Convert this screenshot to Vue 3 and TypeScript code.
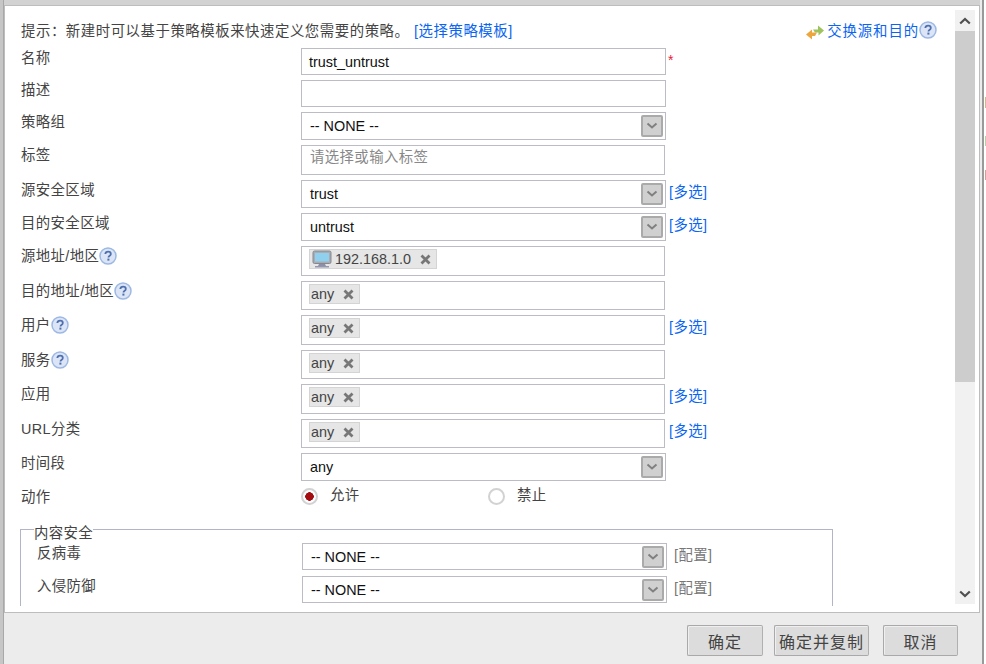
<template>
  <div class="window">
    <div class="edge-left"></div>
    <div class="main">
      <div class="top-band"></div>
      <div class="panel">
        <div class="content">
          <div class="tip-row">
            <div class="tip">
              提示：新建时可以基于策略模板来快速定义您需要的策略。
              <a class="link">[选择策略模板]</a>
            </div>
            <div class="swap">
              <svg class="swap-icon" width="18" height="16" viewBox="0 0 18 16">
                <path d="M7 5.500h5V1.500l6 5-5.500 5V8.500H9z" fill="#9ec25c" />
                <path d="M11 8.500H6V5.500L0 10.500l6 5V12h3z" fill="#eda63e" />
              </svg>
              <a class="link">交换源和目的</a>
              <HelpIcon />
            </div>
          </div>

          <div
            v-for="row in rows"
            :key="row.label"
            class="row"
            :style="{ height: row.pitch + 'px' }"
          >
            <div class="label cjk">
              {{ row.label }}<HelpIcon v-if="row.help" />
            </div>

            <div v-if="row.kind === 'text'" class="field text" :style="{ height: row.h + 'px' }">
              {{ row.value }}
            </div>
            <div
              v-else-if="row.kind === 'placeholder'"
              class="field tagbox placeholder cjk"
              :style="{ height: row.h + 'px' }"
            >
              请选择或输入标签
            </div>
            <div v-else-if="row.kind === 'select'" class="field select" :style="{ height: row.h + 'px' }">
              <span>{{ row.value }}</span>
              <span class="arrow">
                <svg width="12" height="8" viewBox="0 0 12 8">
                  <path d="M1.500 1.500 6 5.500l4.500-4" fill="none" stroke="#808080" stroke-width="2" />
                </svg>
              </span>
            </div>
            <div v-else class="field tagbox" :style="{ height: row.h + 'px' }">
              <span class="chip">
                <svg v-if="row.host" class="host" width="20" height="18" viewBox="0 0 20 18">
                  <rect x="1" y="1" width="18" height="12.500" rx="1.500" fill="#a9adb3" stroke="#85898f" />
                  <rect x="3" y="3" width="14" height="8.500" fill="#8fd0ee" />
                  <path d="M7 14h6l1 2H6z" fill="#8d8fa8" />
                  <rect x="3" y="16" width="14" height="1.500" fill="#9496ad" />
                </svg>
                {{ row.value }}
                <svg class="remove" width="11" height="11" viewBox="0 0 11 11">
                  <path d="M1.500 1.500l8 8M9.500 1.500l-8 8" stroke="#777" stroke-width="2.800" />
                </svg>
              </span>
            </div>

            <span v-if="row.required" class="star">*</span>
            <a v-if="row.multi" class="link multi cjk">[多选]</a>
          </div>

          <div class="action-row">
            <div class="label cjk">动作</div>
            <label class="radio cjk"><span class="dot on"></span>允许</label>
            <label class="radio cjk"><span class="dot"></span>禁止</label>
          </div>

          <fieldset class="group">
            <legend class="cjk">内容安全</legend>
            <div v-for="item in security" :key="item" class="sec-row">
              <div class="sec-label cjk">{{ item }}</div>
              <div class="field select">
                <span>-- NONE --</span>
                <span class="arrow">
                  <svg width="12" height="8" viewBox="0 0 12 8">
                    <path d="M1.500 1.500 6 5.500l4.500-4" fill="none" stroke="#808080" stroke-width="2" />
                  </svg>
                </span>
              </div>
              <a class="config cjk">[配置]</a>
            </div>
          </fieldset>
        </div>

        <div class="scrollbar">
          <div class="sb-btn">
            <svg width="12" height="8" viewBox="0 0 12 8">
              <path d="M1.200 6.500 6 2l4.800 4.500" fill="none" stroke="#505050" stroke-width="2.200" />
            </svg>
          </div>
          <div class="sb-thumb"></div>
          <div class="sb-rest"></div>
          <div class="sb-btn">
            <svg width="12" height="8" viewBox="0 0 12 8">
              <path d="M1.200 1.500 6 6l4.800-4.500" fill="none" stroke="#505050" stroke-width="2.200" />
            </svg>
          </div>
        </div>
      </div>

      <div class="footer">
        <button class="btn ok">确定</button>
        <button class="btn copy">确定并复制</button>
        <button class="btn cancel">取消</button>
      </div>
    </div>
    <div class="edge-right"></div>
  </div>
</template>

<script setup lang="ts">
import { h } from 'vue';

type Row = {
  label: string;
  kind: 'text' | 'placeholder' | 'select' | 'tags';
  pitch: number;
  h: number;
  value?: string;
  help?: boolean;
  multi?: boolean;
  required?: boolean;
  host?: boolean;
};

// small round "?" used beside several labels
const HelpIcon = () =>
  h('svg', { class: 'help', width: 18, height: 18, viewBox: '0 0 18 18', style: 'display:inline-block;vertical-align:-4px;flex:none' }, [
    h('circle', { cx: 9, cy: 9, r: 8, fill: '#dbe5f5', stroke: '#9db8e4', 'stroke-width': 1.5 }),
    h('path', {
      d: 'M6.300 7c.2-1.500 1.300-2.300 2.800-2.300 1.600 0 2.700.9 2.700 2.200 0 1.100-.6 1.600-1.400 2.100-.6.400-.9.700-.9 1.400',
      fill: 'none',
      stroke: '#4f6fae',
      'stroke-width': 1.800,
    }),
    h('rect', { x: 8.400, y: 11.600, width: 2, height: 2, fill: '#4f6fae' }),
  ]);

const rows: Row[] = [
  { label: '名称', kind: 'text', pitch: 32, h: 27, value: 'trust_untrust', required: true },
  { label: '描述', kind: 'text', pitch: 32, h: 27, value: '' },
  { label: '策略组', kind: 'select', pitch: 33, h: 28, value: '-- NONE --' },
  { label: '标签', kind: 'placeholder', pitch: 35, h: 30 },
  { label: '源安全区域', kind: 'select', pitch: 33, h: 28, value: 'trust', multi: true },
  { label: '目的安全区域', kind: 'select', pitch: 33, h: 28, value: 'untrust', multi: true },
  { label: '源地址/地区', kind: 'tags', pitch: 35, h: 30, value: '192.168.1.0', help: true, host: true },
  { label: '目的地址/地区', kind: 'tags', pitch: 34, h: 29, value: 'any', help: true },
  { label: '用户', kind: 'tags', pitch: 35, h: 30, value: 'any', help: true, multi: true },
  { label: '服务', kind: 'tags', pitch: 34, h: 29, value: 'any', help: true },
  { label: '应用', kind: 'tags', pitch: 35, h: 30, value: 'any', multi: true },
  { label: 'URL分类', kind: 'tags', pitch: 34, h: 29, value: 'any', multi: true },
  { label: '时间段', kind: 'select', pitch: 34, h: 28, value: 'any' },
];

const security = ['反病毒', '入侵防御'];
</script>

<style>
html,
body {
  margin: 0;
  background: #ececec;
}
</style>

<style scoped>
.window {
  display: flex;
  width: 986px;
  height: 664px;
  overflow: hidden;
  background: #ececec;
  font-family: "Liberation Sans", "Noto Sans CJK SC", sans-serif;
  font-size: 14.4px;
  color: #444;
}
.cjk {
  letter-spacing: 0.4px;
}
.edge-left {
  width: 3px;
  flex: none;
  background: #c6c6c6;
  border-right: 1px solid #a8a8a8;
}
.edge-right {
  width: 2px;
  flex: none;
  margin-left: 2px;
  background:
    linear-gradient(#d9b48c, #d9b48c) 1px 97px / 1px 11px no-repeat,
    linear-gradient(#b9d0a6, #b9d0a6) 1px 136px / 1px 10px no-repeat,
    linear-gradient(#dc9c96, #dc9c96) 1px 170px / 1px 10px no-repeat,
    #fff;
  border-left: 2px solid #9a9a9a;
}
.main {
  flex: 1;
  display: flex;
  flex-direction: column;
  min-width: 0;
}
.top-band {
  height: 5px;
  flex: none;
  background: #d2d2d2;
}
.panel {
  height: 608px;
  flex: none;
  display: flex;
  box-sizing: border-box;
  background: #fff;
  border: 1px solid #bdbdbd;
}
.content {
  flex: 1;
  min-width: 0;
  overflow: hidden;
  margin-bottom: 6px;
  padding: 15px 18px 0 16px;
}
.tip-row {
  height: 27px;
  display: flex;
  justify-content: space-between;
  line-height: 20px;
}
.tip {
  letter-spacing: 0.55px;
}
.link {
  color: #0a66f0;
}
.swap {
  display: flex;
  align-items: flex-start;
  height: 20px;
  letter-spacing: 0.9px;
}
.swap-icon {
  margin: 3px 3px 0 0;
  filter: blur(0.5px);
}
.row {
  display: flex;
  align-items: flex-start;
}
.label {
  width: 280px;
  flex: none;
  line-height: 20px;
}
.field {
  box-sizing: border-box;
  width: 365px;
  flex: none;
  background: #fff;
  border: 1px solid #bcbcc4;
  color: #111;
}
.text {
  line-height: 26px;
  padding-left: 7px;
}
.select {
  display: flex;
  align-items: center;
  justify-content: space-between;
  height: 27px;
  padding: 0 2px 0 8px;
}
.arrow {
  box-sizing: border-box;
  width: 22px;
  height: 22px;
  display: flex;
  align-items: center;
  justify-content: center;
  background: #d0d0d0;
  border: 2px solid #aaa;
  border-radius: 2px;
}
.tagbox {
  width: 364px;
  padding: 2px 7px;
}
.tagbox + .multi {
  margin-left: 4px;
}
.placeholder {
  padding: 0 8px;
  line-height: 22px;
  color: #888;
}
.chip {
  display: inline-flex;
  align-items: center;
  height: 20px;
  box-sizing: border-box;
  padding: 0 5px 0 1px;
  background: #e6e6e6;
  border: 1px solid #d4d4d4;
  color: #444;
  line-height: 18px;
}
.host {
  margin: 0 3px 0 1px;
}
.remove {
  margin-left: 9px;
}
.star {
  margin: 5px 0 0 2px;
  color: #e8203a;
  font-size: 14px;
  line-height: 14px;
}
.multi {
  margin-left: 3px;
  line-height: 24px;
}
.action-row {
  height: 29px;
  display: flex;
  align-items: flex-start;
}
.radio {
  display: flex;
  align-items: flex-start;
  line-height: 16px;
  width: 187px;
  flex: none;
}
.dot {
  box-sizing: border-box;
  width: 17px;
  height: 17px;
  margin: 1px 12px 0 0;
  border: 2px solid #d2d2d2;
  border-radius: 50%;
  background: #fff;
}
.dot.on {
  background: radial-gradient(circle, #a30d12 0 4px, #fff 4.500px);
}
.group {
  margin: 0 0 0 -1px;
  padding: 0 0 30px;
  width: 813px;
  box-sizing: border-box;
  border: 1px solid #b4b4c8;
  min-width: 0;
}
.group legend {
  margin-left: 13px;
  padding: 8px 0 0;
  line-height: 18px;
}
.sec-row {
  display: flex;
  align-items: flex-start;
  height: 33px;
  padding-left: 16px;
}
.sec-row:first-of-type {
  margin-top: 1px;
}
.sec-label {
  width: 265px;
  flex: none;
  line-height: 20px;
}
.sec-row .field {
  width: 365px;
}
.config {
  margin: 0 0 0 7px;
  color: #777;
  line-height: 25px;
}
.scrollbar {
  width: 20px;
  flex: none;
  margin: 4px 4px 8px 0;
  display: flex;
  flex-direction: column;
}
.sb-btn {
  height: 21px;
  flex: none;
  display: flex;
  align-items: center;
  justify-content: center;
  background: #f1f1f1;
}
.sb-thumb {
  height: 351px;
  flex: none;
  background: #cdcdcd;
}
.sb-rest {
  flex: 1;
  background: #f1f1f1;
}
.footer {
  flex: 1;
  display: flex;
  align-items: flex-start;
  padding-top: 12px;
}
.btn {
  box-sizing: border-box;
  height: 31px;
  padding: 0;
  background: #dcdcdc;
  border: 1px solid #a9a9a9;
  border-right-color: #b0b0b0;
  border-radius: 2px;
  box-shadow: inset 1px 1px 0 #efefef;
  font: inherit;
  font-size: 16px;
  letter-spacing: 1px;
  color: #444;
}
.ok {
  width: 76px;
  margin-left: 683px;
}
.copy {
  width: 95px;
  margin-left: 11px;
}
.cancel {
  width: 75px;
  margin-left: 14px;
}
</style>
